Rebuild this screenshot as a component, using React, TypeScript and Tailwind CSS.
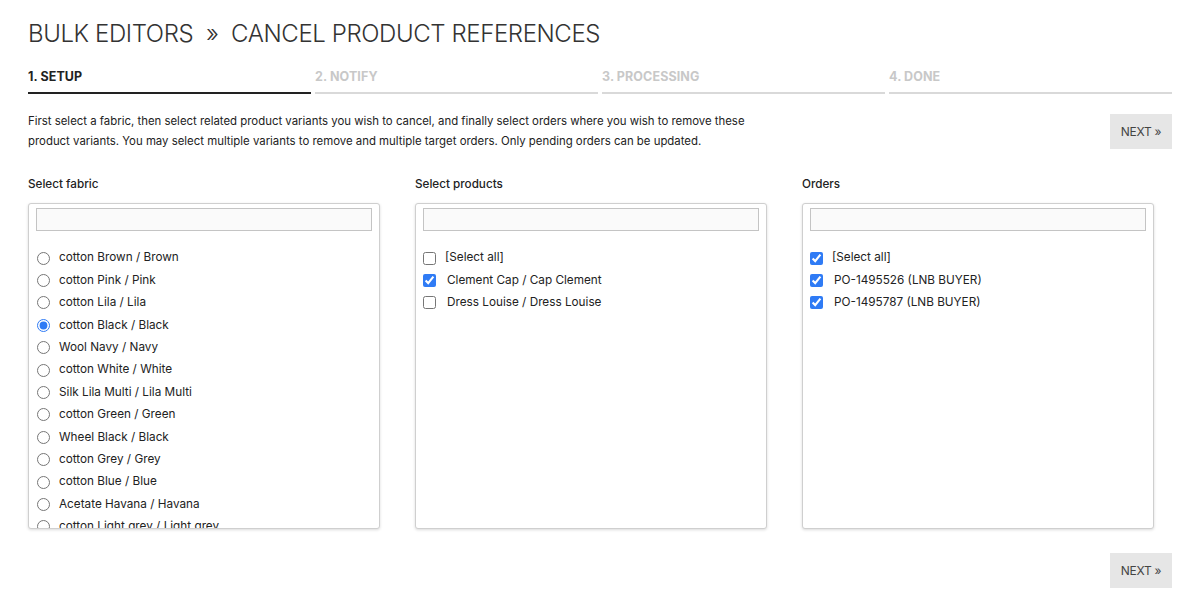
import React, { useState } from 'react';

const fabrics = [
  'cotton Brown / Brown',
  'cotton Pink / Pink',
  'cotton Lila / Lila',
  'cotton Black / Black',
  'Wool Navy / Navy',
  'cotton White / White',
  'Silk Lila Multi / Lila Multi',
  'cotton Green / Green',
  'Wheel Black / Black',
  'cotton Grey / Grey',
  'cotton Blue / Blue',
  'Acetate Havana / Havana',
  'cotton Light grey / Light grey',
  'cotton Red / Red',
];

const steps = ['1. Setup', '2. Notify', '3. Processing', '4. Done'];

function NextButton() {
  return (
    <button className="h-[35px] w-[62px] bg-[#e6e6e6] text-[12px] text-[#444] tracking-tight">
      NEXT »
    </button>
  );
}

function Panel({ label, children }: { label: string; children: React.ReactNode }) {
  return (
    <div>
      <div className="text-[11.7px] font-medium text-[#222] mb-[11px] leading-[16px]">{label}</div>
      <div className="h-[326px] rounded-[3px] border border-[#cfcfcf] shadow-[0_1px_3px_rgba(0,0,0,0.15)] bg-white overflow-hidden px-[7px] pt-[4px]">
        <input className="block w-full h-[23px] border border-[#c4c4c4] bg-[#fafafa] outline-none" />
        <div className="mt-[16px]">{children}</div>
      </div>
    </div>
  );
}

export default function App() {
  const [fabric, setFabric] = useState(3);
  const [products, setProducts] = useState<boolean[]>([false, true, false]);
  const [orders, setOrders] = useState<boolean[]>([true, true, true]);

  return (
    <div className="min-h-[600px] bg-white px-[28px] pt-[18px] text-[#222]" style={{ fontFamily: 'Inter, "Noto Sans", sans-serif' }}>
      <h1 className="text-[24px] font-light text-[#333] leading-[32px] tracking-[-0.4px]">
        BULK EDITORS&nbsp; »&nbsp; CANCEL PRODUCT REFERENCES
      </h1>

      <div className="mt-[19px] grid grid-cols-4 gap-x-[4px]">
        {steps.map((s, i) => (
          <div
            key={s}
            className={`pb-[8px] border-b-2 text-[12.5px] font-bold uppercase leading-[15px] tracking-[0.1px] ${
              i === 0 ? 'border-[#222] text-[#222]' : 'border-[#d9d9d9] text-[#c8c8c8]'
            }`}
          >
            {s}
          </div>
        ))}
      </div>

      <div className="mt-[17px] flex justify-between items-start">
        <p className="text-[11.4px] leading-[20px] w-[740px] text-[#222]">
          First select a fabric, then select related product variants you wish to cancel, and finally select orders where you wish to remove these product variants. You may select multiple variants to remove and multiple target orders. Only pending orders can be updated.
        </p>
        <div className="mt-[3px]">
          <NextButton />
        </div>
      </div>

      <div className="mt-[25px] grid grid-cols-[352px_352px_352px] gap-x-[35px]">
        <Panel label="Select fabric">
          {fabrics.map((f, i) => (
            <label key={f} className="flex items-center h-[22.4px] text-[11.75px] cursor-pointer">
              <input
                type="radio"
                name="fabric"
                checked={fabric === i}
                onChange={() => setFabric(i)}
                className="w-[13px] h-[13px] m-0 ml-[1px] accent-[#2f7bf5]"
              />
              <span className="ml-[9px]">{f}</span>
            </label>
          ))}
        </Panel>

        <Panel label="Select products">
          {['[Select all]', 'Clement Cap / Cap Clement', 'Dress Louise / Dress Louise'].map((p, i) => (
            <label key={p} className="flex items-center h-[22.4px] text-[11.75px] cursor-pointer">
              <input
                type="checkbox"
                checked={products[i]}
                onChange={() => setProducts(products.map((v, j) => (j === i ? !v : v)))}
                className="w-[13px] h-[13px] m-0 accent-[#2f7bf5]"
              />
              <span className={i === 0 ? 'ml-[9px]' : 'ml-[11px]'}>{p}</span>
            </label>
          ))}
        </Panel>

        <Panel label="Orders">
          {['[Select all]', 'PO-1495526 (LNB BUYER)', 'PO-1495787 (LNB BUYER)'].map((o, i) => (
            <label key={o} className="flex items-center h-[22.4px] text-[11.75px] cursor-pointer">
              <input
                type="checkbox"
                checked={orders[i]}
                onChange={() => setOrders(orders.map((v, j) => (j === i ? !v : v)))}
                className="w-[13px] h-[13px] m-0 accent-[#2f7bf5]"
              />
              <span className={i === 0 ? 'ml-[9px]' : 'ml-[11px]'}>{o}</span>
            </label>
          ))}
        </Panel>
      </div>

      <div className="mt-[24px] flex justify-end">
        <NextButton />
      </div>
    </div>
  );
}
